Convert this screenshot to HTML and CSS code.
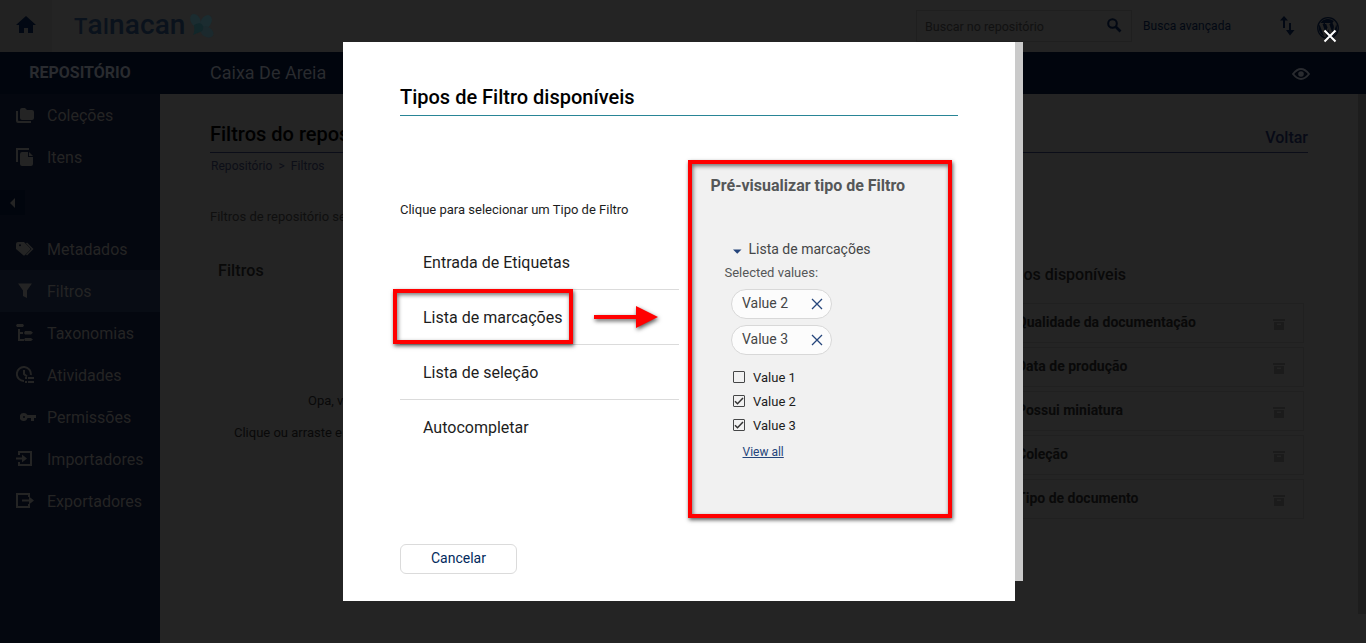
FILE: index.html
```html
<!DOCTYPE html>
<html lang="pt-BR">
<head>
<meta charset="utf-8">
<title>Tainacan - Filtros do repositório</title>
<link rel="stylesheet" href="styles.css">
</head>
<body>
<header class="topbar">
  <div class="home"><svg width="20" height="18" viewBox="0 0 20 18"><path d="M10 0 0 9h3v8h5v-5h4v5h5V9h3z"/></svg></div>
  <div class="logo"><span class="logo-text"><span class="cap">t</span>a<span class="cap">i</span>nacan</span><svg class="flower" width="26" height="26" viewBox="0 0 26 26"><g fill="#1b2c30"><ellipse cx="6.500" cy="7.500" rx="4.800" ry="7" transform="rotate(-28 6.500 7.500)"/><ellipse cx="17" cy="9" rx="5.200" ry="7.500" transform="rotate(32 17 9)"/><ellipse cx="18" cy="19" rx="5" ry="7" transform="rotate(-58 18 19)" fill="#1b292d"/></g><path d="M5 12q7-4 9 1 1 5-3 6l-7 3q2-4 1-10z" fill="#12272a"/></svg></div>
  <div class="search"><span>Buscar no repositório</span><svg width="15" height="15" viewBox="0 0 15 15"><circle cx="5.5" cy="5.5" r="4.3" fill="none" stroke="#020813" stroke-width="2"/><path d="m9 9 4.5 4.5" stroke="#020813" stroke-width="2.6"/></svg></div>
  <span class="advanced">Busca avançada</span>
  <svg class="swap" width="15" height="20" viewBox="0 0 15 20"><path d="M4 0 8 4.500H5V12H3V4.500H0zM9 7h2v7h3.500L10 19.500 6 14h3z"/></svg>
  <svg class="wp" width="22" height="22" viewBox="0 0 22 22"><circle cx="11" cy="11" r="10.3" fill="none" stroke="#020813" stroke-width="1.2"/><path d="M2.500 7.500 7 19.200A9 9 0 0 1 2.500 7.500zM3.500 6A9 9 0 0 1 17 4.300c-1.500.2-1.700 2-.8 3.300.9 1.700.8 2.600.3 4.300l-1.200 3.700-3-8.700h1V6H8v.9h1.200l1.300 3.500-1.900 5.400-3-8.900h1V6zM11.200 12.200l2.700 7.300a9 9 0 0 1-5.200.1zM19 7a9 9 0 0 1-3.500 11.800l2.800-8q.8-2 .7-3.800z"/></svg>
</header>
<div class="subbar"><strong>REPOSITÓRIO</strong><span class="site">Caixa De Areia</span><svg width="18" height="12" viewBox="0 0 18 12"><path d="M1 6q8-10 16 0-8 10-16 0z" fill="none" stroke="#292b2f" stroke-width="2"/><circle cx="9" cy="6" r="2.800" fill="#292b2f"/></svg></div>
<div class="body">
  <nav class="sidebar">
    <div class="item"><svg width="19" height="18" viewBox="0 0 19 18"><path d="M4 4q0-2 2-2h3l2 2h5q2 0 2 2v6q0 2-2 2H6q-2 0-2-2zM0 5h2v9q0 1 1 1h12v2H2q-2 0-2-2z"/></svg>Coleções</div>
    <div class="item"><svg width="19" height="18" viewBox="0 0 19 18"><path d="M0 0h13v2H2v12H0zM6 4h6v5h5v7q0 2-2 2H6q-2 0-2-2V6q0-2 2-2zM13 4l4 4h-4z"/></svg>Itens</div>
    <div class="toggle"><svg width="6" height="10" viewBox="0 0 6 10"><path d="M0 5 5 0v10z"/></svg></div>
    <div class="item"><svg width="19" height="18" viewBox="0 0 19 18"><path fill-rule="evenodd" d="M0 4q0-2 2-2h6l6 6q1 1 0 2l-5 5q-1 1-2 0L0 9zM4 4.300a1 1 0 1 0 0 2 1 1 0 0 0 0-2z"/><path d="m10.500 3 6 6-6 6" fill="none" stroke="#242424" stroke-width="1.500"/></svg>Metadados</div>
    <div class="item active"><svg width="19" height="18" viewBox="0 0 19 18"><path d="M2 1.500h14L11 8.500V16l-4-2V8.500z"/></svg>Filtros</div>
    <div class="item"><svg width="19" height="18" viewBox="0 0 19 18"><path d="M1 0h6l1 1.500L7 3H1L0 1.500zM2 5h2v3h3v2H4v5h4v2H2zM9 7h6l2 1.700L15 10.500H9L8 9zM9 14h6l2 1.500-2 1.500H9l-1-1.500z"/></svg>Taxonomias</div>
    <div class="item"><svg width="19" height="18" viewBox="0 0 19 18"><path d="M14.800 9A7 7 0 1 0 8 15M8 4v4l3 2.500" fill="none" stroke="#242424" stroke-width="2"/><path d="M9 11h2v2H9zM12 11h6v2h-6zM9 15h2v2H9zM12 15h6v2h-6z"/></svg>Atividades</div>
    <div class="item"><svg class="key" width="19" height="18" viewBox="0 0 19 18"><path fill-rule="evenodd" d="M4 5a4 4 0 0 1 3.500 2H16v3h-2v3h-3v-3H7.500A4 4 0 1 1 4 5zm0 3a1 1 0 1 0 0 2 1 1 0 0 0 0-2z"/></svg>Permissões</div>
    <div class="item"><svg width="19" height="18" viewBox="0 0 19 18"><path d="M3 5V2h12v13H3v-3M0 8.500h6" fill="none" stroke="#242424" stroke-width="2"/><path d="m6 4.500 5 4-5 4z"/></svg>Importadores</div>
    <div class="item"><svg width="19" height="18" viewBox="0 0 19 18"><path d="M13 5V2H1v13h12v-3M6 8.500h8" fill="none" stroke="#242424" stroke-width="2"/><path d="m13 4.500 5 4-5 4z"/></svg>Exportadores</div>
  </nav>
  <main class="content">
    <div class="heading"><h1>Filtros do repositório</h1><b>Voltar</b></div>
    <div class="crumbs">Repositório <i>&gt;</i> Filtros</div>
    <p class="intro">Filtros de repositório serão</p>
    <div class="columns">
      <section class="left"><h2>Filtros</h2><p class="empty">Opa, você</p><p class="drag">Clique ou arraste e</p></section>
      <section class="right">
        <h2>Metadados disponíveis</h2>
        <div class="meta">Qualidade da documentação<svg width="12" height="11" viewBox="0 0 12 11"><path fill-rule="evenodd" d="M0 0h12v2H0zM1 3h10v8H1zM4 4.500h4V6H4z"/></svg></div>
        <div class="meta">Data de produção<svg width="12" height="11" viewBox="0 0 12 11"><path fill-rule="evenodd" d="M0 0h12v2H0zM1 3h10v8H1zM4 4.500h4V6H4z"/></svg></div>
        <div class="meta">Possui miniatura<svg width="12" height="11" viewBox="0 0 12 11"><path fill-rule="evenodd" d="M0 0h12v2H0zM1 3h10v8H1zM4 4.500h4V6H4z"/></svg></div>
        <div class="meta">Coleção<svg width="12" height="11" viewBox="0 0 12 11"><path fill-rule="evenodd" d="M0 0h12v2H0zM1 3h10v8H1zM4 4.500h4V6H4z"/></svg></div>
        <div class="meta">Tipo de documento<svg width="12" height="11" viewBox="0 0 12 11"><path fill-rule="evenodd" d="M0 0h12v2H0zM1 3h10v8H1zM4 4.500h4V6H4z"/></svg></div>
      </section>
    </div>
  </main>
  <div class="scroll"></div>
</div>

<div class="modal">
  <div class="dialog">
    <h2 class="title">Tipos de Filtro disponíveis</h2>
    <div class="panes">
      <div class="types">
        <p>Clique para selecionar um Tipo de Filtro</p>
        <ul><li>Entrada de Etiquetas</li><li>Lista de marcações</li><li>Lista de seleção</li><li>Autocompletar</li></ul>
      </div>
      <div class="preview">
        <h3>Pré-visualizar tipo de Filtro</h3>
        <div class="collapse"><svg width="9" height="5" viewBox="0 0 9 5"><path d="M0 .5h8.500L4.250 4.700z"/></svg>Lista de marcações</div>
        <div class="selected">Selected values:</div>
        <div class="tag"><span>Value 2</span><svg width="12" height="12" viewBox="0 0 12 12"><path d="m1 1 10 10M11 1 1 11"/></svg></div>
        <div class="tag"><span>Value 3</span><svg width="12" height="12" viewBox="0 0 12 12"><path d="m1 1 10 10M11 1 1 11"/></svg></div>
        <div class="checks">
          <div class="check"><i></i>Value 1</div>
          <div class="check"><i><svg width="10" height="10" viewBox="0 0 10 10"><path d="m1 5.300 2.500 2.500L9 2"/></svg></i>Value 2</div>
          <div class="check"><i><svg width="10" height="10" viewBox="0 0 10 10"><path d="m1 5.300 2.500 2.500L9 2"/></svg></i>Value 3</div>
        </div>
        <a class="all">View all</a>
      </div>
    </div>
    <button class="cancel">Cancelar</button>
  </div>
  <div class="track"></div>
</div>
<svg class="close" width="14" height="14" viewBox="0 0 14 14"><path d="m1.500 1.500 11 11M12.500 1.500l-11 11"/></svg>
<div class="mark mark-item"></div>
<div class="mark mark-preview"></div>
<svg class="arrow" width="66" height="24" viewBox="0 0 66 24"><path d="M0 9h42V0l22 11-22 11v-9H0z"/></svg>
</body>
</html>
```
FILE: styles.css
```css
* { box-sizing: border-box; }
body { margin: 0; width: 1366px; height: 643px; overflow: hidden; position: relative; background: #242424; color: #090909; font-family: Roboto, "Liberation Sans", sans-serif; }
h1, h2, h3, p, ul { margin: 0; padding: 0; }
svg { flex: none; }
.topbar { height: 52px; display: flex; align-items: center; fill: #020813; color: #020813; }
.home { width: 52px; height: 52px; background: #222; display: flex; align-items: center; justify-content: center; }
.home svg { margin-top: -2px; }
.logo { display: flex; align-items: center; width: 864px; padding-left: 22px; }
.logo-text { font: 500 28px/34px Roboto, sans-serif; letter-spacing: .1px; color: #0a121c; width: 115px; white-space: nowrap; }
.cap { font-size: 22px; text-transform: uppercase; }
.search { width: 216px; height: 32px; border: 1px solid #1f1f1f; display: flex; align-items: center; justify-content: space-between; padding: 0 9px 0 8px; font-size: 12.5px; color: #111; }
.search svg { margin-top: -2px; }
.advanced { font-size: 12px; margin-left: 11px; width: 137px; letter-spacing: .04px; }
.wp { margin-left: 22px; margin-top: 3px; }
.subbar { height: 42px; background: #01050d; color: #292b2f; display: flex; align-items: center; }
.subbar strong { width: 160px; text-align: center; font-size: 16px; font-weight: 700; margin-top: -2px; }
.site { font-size: 18px; margin: -2px 0 0 50px; width: 1082px; }
.subbar svg { margin-top: 2px; }
.body { display: flex; height: 549px; }
.sidebar { width: 160px; background: #04070f; flex: none; }
.item { height: 42px; display: flex; align-items: center; padding-left: 16px; gap: 12px; font-size: 16px; color: #242424; fill: #242424; }
.active { background: #080c14; }
.key { margin-left: 4px; margin-right: -4px; }
.toggle { width: 25px; height: 25px; margin: 12px 0 13px; background: #01050d; display: flex; align-items: center; justify-content: center; fill: #242424; }
.content { width: 1198px; flex: none; padding: 25px 50px 0; }
.heading { display: flex; justify-content: space-between; height: 34px; border-bottom: 1px solid #0b0d18; line-height: 30px; }
.heading h1 { font-size: 20px; font-weight: 500; color: #000; }
.heading b { font-size: 16px; font-weight: 500; color: #070a16; line-height: 38px; }
.crumbs { font-size: 12px; line-height: 16px; padding: 5px 0 0 1px; color: #0c0e17; letter-spacing: .05px; }
.crumbs i { font-style: normal; margin: 0 3px; }
.intro { font-size: 13px; line-height: 20px; margin-top: 33px; color: #0f0f0f; }
.columns { display: flex; }
.columns h2 { font-size: 16px; font-weight: 500; line-height: 20px; }
.left { width: 789px; padding: 34px 0 0 8px; }
.left h2 { margin-top: -.5px; letter-spacing: .1px; }
.empty { font-size: 13px; line-height: 20px; margin: 110px 0 0 90px; }
.drag { font-size: 13px; line-height: 20px; margin: 12px 0 0 16px; }
.right { width: 305px; padding-top: 38px; }
.right h2 { width: 127px; display: flex; justify-content: flex-end; white-space: nowrap; margin-bottom: 18px; }
.meta { height: 40px; margin-bottom: 4px; border: 1px solid #202020; display: flex; align-items: center; justify-content: space-between; padding: 0 18px 2px 17px; font-size: 14px; font-weight: 700; }
.meta svg { fill: #1b1b1b; margin-top: 4px; }
.scroll { width: 8px; height: 520px; background: #1d1d1d; }
.modal { position: absolute; left: 343px; top: 42px; display: flex; }
.dialog { width: 672px; height: 559px; background: #fff; padding: 40px 57px 0; }
.track { width: 8px; height: 539px; background: #cacaca; }
.title { height: 34px; border-bottom: 1px solid #298596; font-size: 20px; font-weight: 500; line-height: 30px; color: #000; }
.panes { display: flex; height: 428px; padding-top: 46px; }
.types { width: 279px; margin-right: 11px; padding-top: 38px; color: #1d1d1d; }
.types p { font-size: 13px; line-height: 20px; }
.types ul { list-style: none; margin-top: 15px; }
.types li { height: 55px; line-height: 55px; border-bottom: 1px solid #dbdbdb; padding-left: 23px; font-size: 16px; }
.types li:last-child { border: 0; }
.preview { width: 260px; height: 354px; background: #f1f1f1; padding: 14px 20px 0; color: #454647; }
.preview h3 { font-size: 16px; font-weight: 700; line-height: 20px; color: #555758; white-space: nowrap; padding-left: .5px; }
.collapse { display: flex; align-items: center; gap: 7px; font-size: 14px; line-height: 20px; margin: 43px 0 0 22.5px; }
.collapse svg { fill: #25457b; margin-top: 4px; }
.selected { font-size: 13px; line-height: 18px; margin: 5px 0 7px 14.5px; color: #555758; }
.tag { width: 101px; height: 30px; margin: 0 0 6px 21px; border: 1px solid #d8d8d8; border-radius: 15px; background: #fcfcfc; display: flex; align-items: center; justify-content: space-between; padding: 0 8px 0 10px; font-size: 14px; }
.tag span { margin-top: -2px; }
.tag svg, .check svg { fill: none; stroke: #25457b; stroke-width: 1.3; }
.checks { margin: 10px 0 0 23px; }
.check { display: flex; align-items: center; height: 24px; gap: 8px; font-size: 13px; color: #1d1d1d; }
.check i { width: 12px; height: 12px; border: 1px solid #454647; border-radius: 1px; display: flex; }
.check svg { stroke: #333; stroke-width: 1.5; }
.all { display: block; font-size: 12px; line-height: 16px; margin: 7px 0 0 32.5px; color: #25457b; text-decoration: underline; }
.cancel { display: block; width: 117px; height: 30px; padding: 0 0 2px; background: #fff; border: 1px solid #dbdbdb; border-radius: 6px; font: 14px Roboto, sans-serif; color: #01295c; }
.close { position: absolute; left: 1323px; top: 29px; fill: none; stroke: #fff; stroke-width: 2; }
.mark { position: absolute; border: 4px solid #f00; box-shadow: 1px 2px 4px rgba(0,0,0,.65), inset 1px 2px 4px rgba(0,0,0,.55); }
.mark-item { left: 393px; top: 289px; width: 180px; height: 55px; }
.mark-preview { left: 688px; top: 160px; width: 264px; height: 358px; }
.arrow { position: absolute; left: 594px; top: 306px; fill: #f00; overflow: visible; filter: drop-shadow(1px 2px 2px rgba(0,0,0,.65)); }
```
